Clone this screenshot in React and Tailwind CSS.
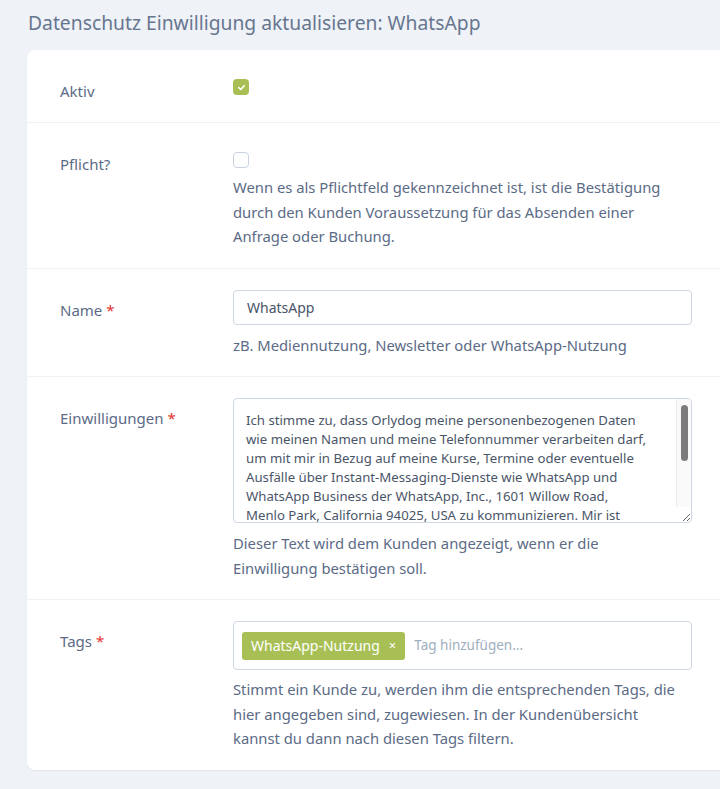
import React from "react";

const consentText =
  "Ich stimme zu, dass Orlydog meine personenbezogenen Daten wie meinen Namen und meine Telefonnummer verarbeiten darf, um mit mir in Bezug auf meine Kurse, Termine oder eventuelle Ausfälle über Instant-Messaging-Dienste wie WhatsApp und WhatsApp Business der WhatsApp, Inc., 1601 Willow Road, Menlo Park, California 94025, USA zu kommunizieren. Mir ist bewusst, dass dabei meine Telefonnummer und weitere Daten an WhatsApp übermittelt werden und dass ich diese Einwilligung jederzeit widerrufen kann.";

const Row = ({ label, required, children, last }) => (
  <div className={`flex pt-[21px] pb-[19px] ${last ? "" : "border-b border-[#eef1f6]"}`}>
    <div className="w-[206px] shrink-0 pl-[33px] pt-[9px] leading-[22px] text-[15px]">
      {label}
      {required && <span className="text-[#e3342f] ml-1">*</span>}
    </div>
    <div className="w-[459px]">{children}</div>
  </div>
);

const Help = ({ children, className = "" }) => (
  <p className={`w-[475px] text-[14.8px] leading-[24.5px] text-[#5b6b86] ${className}`}>{children}</p>
);

export default function App() {
  return (
    <div
      className="min-h-[789px] bg-[#eff2f7] overflow-hidden text-[#5b6b86]"
      style={{ fontFamily: "'Noto Sans', 'Open Sans', sans-serif" }}
    >
      <h1 className="pl-[28px] pt-[8px] pb-[12px] text-[19.3px] leading-[30px] text-[#67768f]">
        Datenschutz Einwilligung aktualisieren: WhatsApp
      </h1>

      <div className="ml-[27px] w-[720px] bg-white rounded-lg shadow-[0_1px_2px_rgba(0,0,0,0.06)]">
        {/* Aktiv */}
        <div className="flex pt-[21px] pb-[20px] border-b border-[#eef1f6]">
          <div className="w-[206px] shrink-0 pl-[33px] pt-[9px] leading-[22px] text-[15px]">Aktiv</div>
          <div className="pt-2">
            <span className="flex items-center justify-center w-4 h-4 rounded-[4px] bg-[#a8bf55]">
              <svg width="9" height="9" viewBox="0 0 10 10" fill="none">
                <path d="M2 5.2 4.2 7.2 8 3" stroke="white" strokeWidth="1.8" strokeLinecap="round" strokeLinejoin="round" />
              </svg>
            </span>
          </div>
        </div>

        {/* Pflicht */}
        <Row label="Pflicht?">
          <div className="pt-2">
            <span className="block w-4 h-4 rounded-[4px] border border-[#c9d3e0] bg-white" />
          </div>
          <Help className="mt-[7px]">
            Wenn es als Pflichtfeld gekennzeichnet ist, ist die Bestätigung
            <br />
            durch den Kunden Voraussetzung für das Absenden einer
            <br />
            Anfrage oder Buchung.
          </Help>
        </Row>

        {/* Name */}
        <Row label="Name" required>
          <input
            defaultValue="WhatsApp"
            className="w-full h-[35px] px-[13px] rounded border border-[#cfd8e3] text-[14px] text-[#4a5568] outline-none"
          />
          <Help className="mt-[8px]">zB. Mediennutzung, Newsletter oder WhatsApp-Nutzung</Help>
        </Row>

        {/* Einwilligungen */}
        <Row label="Einwilligungen" required>
          <div className="relative h-[125px] rounded border border-[#cfd8e3] overflow-hidden">
            <textarea
              defaultValue={consentText}
              className="block w-full h-full pl-[12px] pr-[42px] pt-[12px] pb-0 overflow-hidden text-[13.2px] leading-[19px] text-[#4a5568] outline-none"
            />
            {/* scrollbar */}
            <div className="absolute top-0 right-0 w-[15px] h-[108px] bg-[#fafafa] border-l border-[#ececec] pointer-events-none">
              <div className="mx-auto mt-[6px] w-[7px] h-[56px] rounded-full bg-[#7c7c7c]" />
            </div>
          </div>
          <Help className="mt-[8px]">
            Dieser Text wird dem Kunden angezeigt, wenn er die
            <br />
            Einwilligung bestätigen soll.
          </Help>
        </Row>

        {/* Tags */}
        <Row label="Tags" required last>
          <div className="flex items-center gap-[9px] h-[49px] px-[8px] rounded border border-[#cfd8e3]">
            <span className="flex items-center gap-[9px] h-[28px] px-[9px] rounded-[3px] bg-[#a8bf55] text-white text-[14px]">
              WhatsApp-Nutzung
              <span className="text-[13px] leading-none">×</span>
            </span>
            <input
              placeholder="Tag hinzufügen..."
              className="flex-1 text-[13.5px] text-[#4a5568] placeholder:text-[#a0aec0] outline-none"
            />
          </div>
          <Help className="mt-[7px]">
            Stimmt ein Kunde zu, werden ihm die entsprechenden Tags, die
            <br />
            hier angegeben sind, zugewiesen. In der Kundenübersicht
            <br />
            kannst du dann nach diesen Tags filtern.
          </Help>
        </Row>
      </div>
    </div>
  );
}
